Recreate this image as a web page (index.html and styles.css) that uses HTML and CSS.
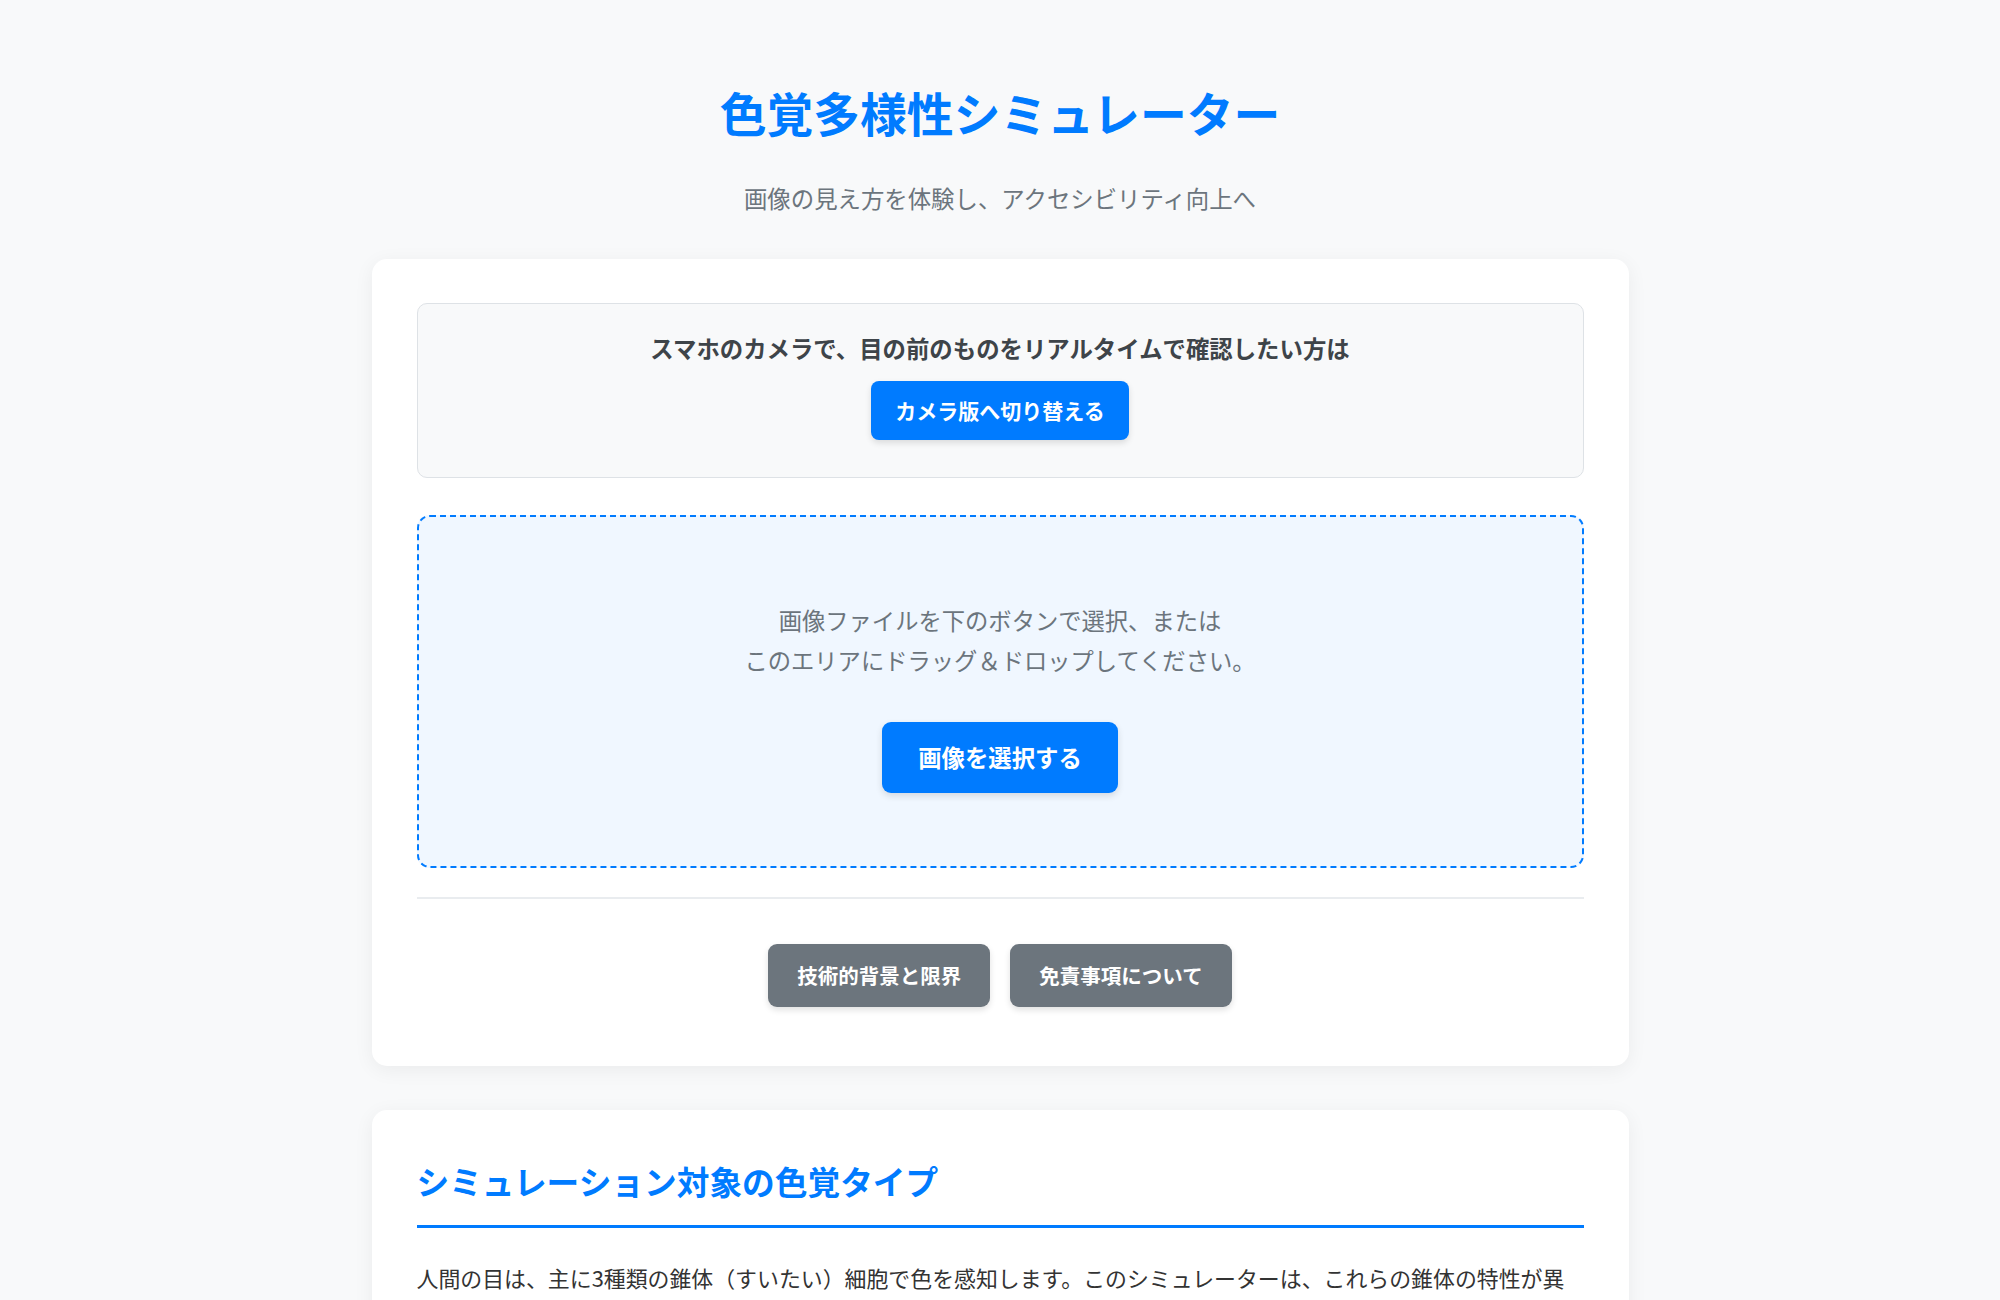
FILE: index.html
```html
<!DOCTYPE html>
<html lang="ja">
<head>
<meta charset="utf-8">
<title>色覚多様性シミュレーター</title>
<link rel="stylesheet" href="styles.css">
</head>
<body>
<div class="page">
  <header class="header">
    <h1 class="title">色覚多様性シミュレーター</h1>
    <p class="subtitle">画像の見え方を体験し、アクセシビリティ向上へ</p>
  </header>

  <main class="card">
    <section class="camera-box">
      <p class="camera-text">スマホのカメラで、目の前のものをリアルタイムで確認したい方は</p>
      <button class="btn btn-camera" type="button">カメラ版へ切り替える</button>
    </section>

    <section class="drop-zone">
      <p class="drop-text">画像ファイルを下のボタンで選択、または<br>このエリアにドラッグ＆ドロップしてください。</p>
      <button class="btn btn-select" type="button">画像を選択する</button>
    </section>

    <hr class="divider">

    <div class="info-buttons">
      <button class="btn btn-info" type="button">技術的背景と限界</button>
      <button class="btn btn-info" type="button">免責事項について</button>
    </div>
  </main>

  <section class="card card-types">
    <h2 class="section-title">シミュレーション対象の色覚タイプ</h2>
    <p class="section-text">人間の目は、主に3種類の錐体（すいたい）細胞で色を感知します。このシミュレーターは、これらの錐体の特性が異なる場合の見え方を再現します。</p>
    <p class="section-text">P型（1型）、D型（2型）、T型（3型）の各色覚タイプについて、画像がどのように見えるかを確認できます。</p>
  </section>
</div>
</body>
</html>
```

FILE: styles.css
```css
* {
  box-sizing: border-box;
}

body {
  margin: 0;
  background: #f8f9fa;
  font-family: "Noto Sans CJK JP", "Noto Sans", sans-serif;
  color: #333333;
}

.page {
  width: 1257px;
  margin: 0 auto;
  padding-bottom: 60px;
}

.header {
  padding-top: 84px;
  text-align: center;
}

.title {
  margin: 0 0 42px;
  font-size: 46.8px;
  line-height: 55px;
  font-weight: 700;
  color: #007bff;
}

.subtitle {
  margin: 0 0 44px;
  font-size: 23.4px;
  line-height: 34px;
  color: #6c757d;
}

.card {
  background: #ffffff;
  border-radius: 15px;
  box-shadow: 0 4px 20px rgba(0, 0, 0, 0.06);
  padding: 44px 45px 59px;
}

.camera-box {
  display: flex;
  flex-direction: column;
  align-items: center;
  background: #f8f9fa;
  border: 1px solid #dee2e6;
  border-radius: 10px;
  padding: 27px 20px 37px;
}

.camera-text {
  margin: 0 0 16px;
  font-size: 23.4px;
  line-height: 34px;
  font-weight: 700;
  color: #3e4449;
}

.btn {
  border: none;
  font-family: inherit;
  font-weight: 700;
  color: #ffffff;
  cursor: pointer;
}

.btn-camera {
  background: #007bff;
  border-radius: 8px;
  font-size: 21px;
  line-height: 31px;
  padding: 14px 24px;
  box-shadow: 0 3px 6px rgba(0, 0, 0, 0.12);
}

.drop-zone {
  display: flex;
  flex-direction: column;
  align-items: center;
  margin-top: 37px;
  background: #f0f7ff;
  border: 2px dashed #007bff;
  border-radius: 13px;
  padding: 83px 20px 73px;
}

.drop-text {
  margin: 0 0 42px;
  font-size: 23.3px;
  line-height: 40px;
  color: #6c757d;
  text-align: center;
}

.btn-select {
  background: #007bff;
  border-radius: 9px;
  font-size: 23.4px;
  line-height: 35px;
  padding: 18px 36px;
  box-shadow: 0 3px 7px rgba(0, 0, 0, 0.12);
}

.divider {
  margin: 29px 0 45px;
  border: none;
  border-top: 2px solid #e9ecef;
}

.info-buttons {
  display: flex;
  justify-content: center;
  gap: 20px;
}

.btn-info {
  background: #6c757d;
  border-radius: 9px;
  font-size: 20.5px;
  line-height: 31px;
  padding: 16px 29px;
  box-shadow: 0 3px 6px rgba(0, 0, 0, 0.12);
}

.card-types {
  margin-top: 44px;
  padding: 45px;
}

.section-title {
  margin: 0;
  font-size: 32.7px;
  line-height: 52px;
  font-weight: 700;
  color: #007bff;
  padding-bottom: 18px;
  border-bottom: 3px solid #007bff;
}

.section-text {
  margin: 30px 0 0;
  font-size: 21.9px;
  line-height: 39.6px;
  color: #333333;
}
```
